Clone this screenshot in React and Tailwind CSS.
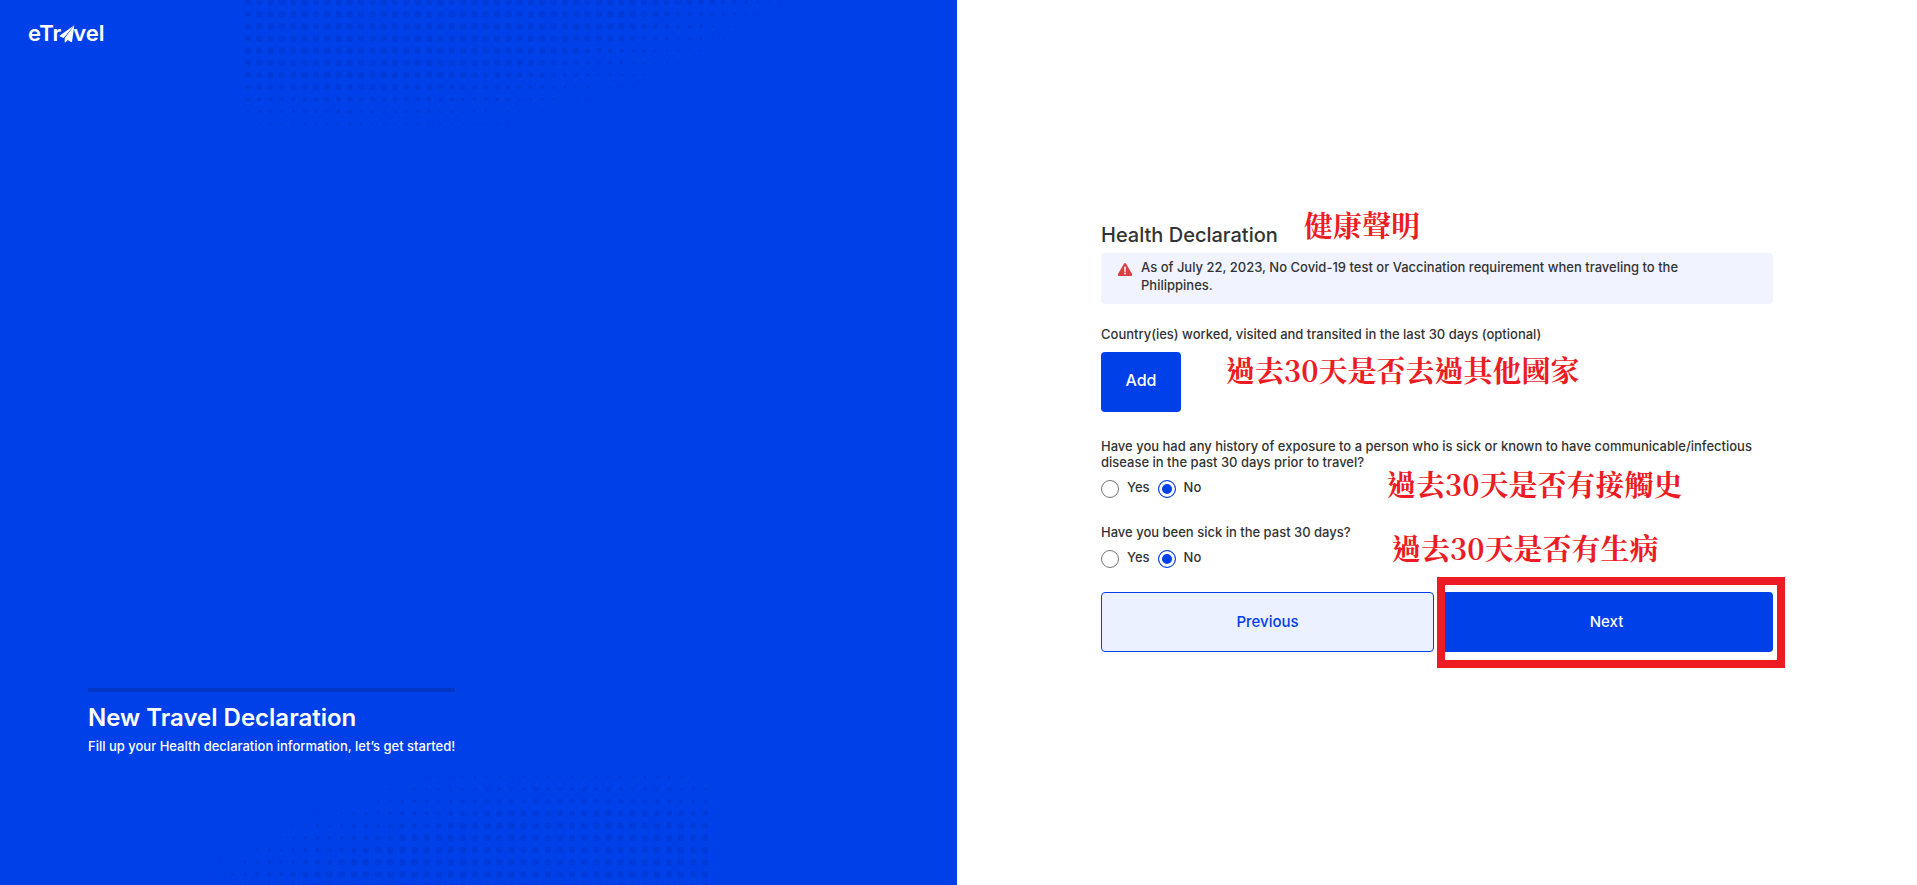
import { useId } from 'react';
import clsx from 'clsx';

const halftone = (cols, rows, x0, y0, dx, dy, cx, cy, radius) => {
  const dots = [];
  for (let row = 0; row < rows; row++) {
    for (let col = 0; col < cols; col++) {
      const x = x0 + col * dx;
      const y = y0 + row * dy;
      const depth = radius - Math.hypot(x - cx, y - cy);
      if (depth > 2) {
        dots.push({ x, y, r: Math.min(3.2, 0.4 + depth * 0.04) });
      }
    }
  }
  return dots;
};

const topDots = halftone(52, 12, 3, 2, 11.32, 12.17, 115, -581, 730);
const bottomDots = halftone(46, 10, 8, 12, 12.12, 12.17, 423, 651, 668);

const Dots = ({ dots, width, height, className }) => (
  <svg
    aria-hidden="true"
    width={width}
    height={height}
    className={clsx('absolute', className)}
    fill="#003bd9"
  >
    {dots.map((dot) => (
      <circle key={`${dot.x}-${dot.y}`} cx={dot.x} cy={dot.y} r={dot.r} />
    ))}
  </svg>
);

const Logo = () => (
  <a href="#" aria-label="eTravel" className="flex items-baseline text-[22px] leading-6 font-semibold text-white">
    <span>eTr</span>
    <svg width="16" height="18" viewBox="0 0 15 18" className="-mx-0.5 translate-y-0.5" fill="currentColor">
      <path d="M14.8 0.2 0.3 10.6c-.4.3-.3.8.1 1l3.8 1.5L14.8 0.2Z" />
      <path d="M14.8 0.2 5.2 13.2v3.6c0 .6.6.8 1 .4l1.9-2.2 3.4 2.1c.5.3 1 0 1.1-.5L14.8 0.2Z" />
    </svg>
    <span>vel</span>
  </a>
);

const WarningIcon = () => (
  <svg aria-hidden="true" viewBox="0 0 16 16" className="mt-1 size-4 shrink-0">
    <path
      d="M6.9 1.7a1.3 1.3 0 0 1 2.2 0l5.9 10.4c.5.9-.1 1.9-1.1 1.9H2.1c-1 0-1.6-1-1.1-1.9L6.9 1.7Z"
      fill="#d94044"
    />
    <path d="M8 5.2v4" stroke="#fff" strokeWidth="1.5" strokeLinecap="round" />
    <circle cx="8" cy="11.5" r="0.9" fill="#fff" />
  </svg>
);

const Note = ({ children, className }) => (
  <span
    className={clsx(
      "absolute text-[29px] leading-7 font-bold whitespace-nowrap text-[#ed1c24] font-['Noto_Serif_CJK_TC','Noto_Sans_CJK_TC',serif]",
      className
    )}
  >
    {children}
  </span>
);

const YesNoQuestion = ({ question, children }) => {
  const name = useId();

  return (
    <div className="relative">
      <fieldset>
        <legend className="mb-2.5 leading-4">{question}</legend>
        <div className="flex gap-2">
          {['Yes', 'No'].map((option) => (
            <label key={option} className="flex gap-2 leading-[14px]">
              <input
                type="radio"
                name={name}
                value={option}
                defaultChecked={option === 'No'}
                className="size-[18px] appearance-none rounded-full border border-[#767676] bg-white checked:border-[#0040e8] checked:bg-[#0040e8] checked:shadow-[inset_0_0_0_3px_#fff]"
              />
              {option}
            </label>
          ))}
        </div>
      </fieldset>
      {children}
    </div>
  );
};

const IntroPanel = () => (
  <aside className="relative flex flex-col justify-between overflow-hidden bg-[#0040e8] text-white">
    <Dots dots={topDots} width={600} height={140} className="top-0 left-[245px]" />
    <Dots dots={bottomDots} width={560} height={120} className="bottom-0 left-[152px]" />
    <header className="relative px-7 py-[21px]">
      <Logo />
    </header>
    <div className="relative mb-[127px] ml-[88px] w-fit border-t-4 border-[#0036c5] pt-2.5">
      <h1 className="text-[24px] leading-8 font-semibold">New Travel Declaration</h1>
      <p className="text-[13px] leading-6 font-medium">
        Fill up your Health declaration information, let’s get started!
      </p>
    </div>
  </aside>
);

const HealthForm = () => (
  <form
    className="w-full max-w-2xl text-[13px] font-medium text-[#333]"
    onSubmit={(e) => e.preventDefault()}
  >
    <div className="relative mb-1">
      <h2 className="text-[20px] leading-7">Health Declaration</h2>
      <Note className="-top-2.5 left-[203px]">健康聲明</Note>
    </div>

    <div role="alert" className="flex gap-2 rounded bg-[#f1f4ff] pt-[5px] pr-16 pb-2.5 pl-4 leading-[18px]">
      <WarningIcon />
      <p>
        As of July 22, 2023, No Covid-19 test or Vaccination requirement when traveling to the Philippines.
      </p>
    </div>

    <div className="relative mt-[22px] mb-[26px]">
      <p id="countries" className="mb-2.5 leading-4">
        Country(ies) worked, visited and transited in the last 30 days (optional)
      </p>
      <button
        type="button"
        aria-describedby="countries"
        className="h-[60px] w-20 rounded bg-[#0040e8] pb-1 text-[16px] text-white"
      >
        Add
      </button>
      <Note className="top-[30px] left-[125px]">過去30天是否去過其他國家</Note>
    </div>

    <div className="flex flex-col gap-[26px]">
      <YesNoQuestion question="Have you had any history of exposure to a person who is sick or known to have communicable/infectious disease in the past 30 days prior to travel?">
        <Note className="top-8 left-[286px]">過去30天是否有接觸史</Note>
      </YesNoQuestion>
      <YesNoQuestion question="Have you been sick in the past 30 days?">
        <Note className="top-2.5 left-[291px]">過去30天是否有生病</Note>
      </YesNoQuestion>
    </div>

    <div className="mt-6 grid grid-cols-2 gap-1.5 text-[15px]">
      <button
        type="button"
        className="h-[60px] rounded border border-[#0040e8] bg-[#ebf1ff] text-[#0040e8]"
      >
        Previous
      </button>
      <div className="relative">
        <button type="submit" className="h-[60px] w-full rounded bg-[#0040e8] text-white">
          Next
        </button>
        <div className="pointer-events-none absolute -top-[15px] -right-3 -bottom-4 -left-[3px] border-8 border-[#ed1c24]" />
      </div>
    </div>
  </form>
);

export default function App() {
  return (
    <div className="grid min-h-screen grid-cols-[319fr_320fr] bg-white font-['Inter',sans-serif]">
      <IntroPanel />
      <main className="flex items-center justify-center pb-3">
        <HealthForm />
      </main>
    </div>
  );
}
